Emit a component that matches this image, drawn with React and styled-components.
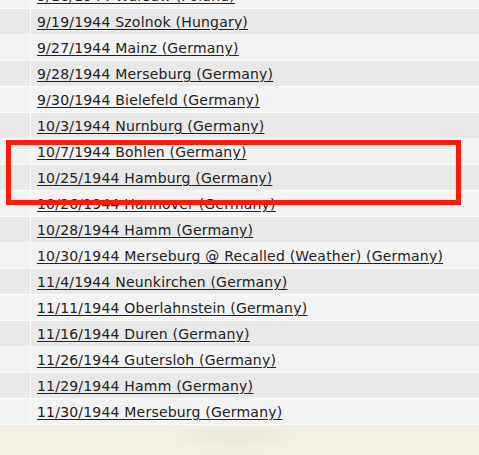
import React from 'react'
import styled, { createGlobalStyle } from 'styled-components'

const missions = [
  '9/18/1944 Warsaw (Poland)',
  '9/19/1944 Szolnok (Hungary)',
  '9/27/1944 Mainz (Germany)',
  '9/28/1944 Merseburg (Germany)',
  '9/30/1944 Bielefeld (Germany)',
  '10/3/1944 Nurnburg (Germany)',
  '10/7/1944 Bohlen (Germany)',
  '10/25/1944 Hamburg (Germany)',
  '10/26/1944 Hannover (Germany)',
  '10/28/1944 Hamm (Germany)',
  '10/30/1944 Merseburg @ Recalled (Weather) (Germany)',
  '11/4/1944 Neunkirchen (Germany)',
  '11/11/1944 Oberlahnstein (Germany)',
  '11/16/1944 Duren (Germany)',
  '11/26/1944 Gutersloh (Germany)',
  '11/29/1944 Hamm (Germany)',
  '11/30/1944 Merseburg (Germany)'
]

const App = () => {
  return (
    <Page>
      <GlobalStyle />
      <Table>
        {missions.map((m, i) => (
          <Row key={m} dark={i % 2 === 1}>
            <Gutter />
            <Cell>
              <MissionLink href='#'>{m}</MissionLink>
            </Cell>
          </Row>
        ))}
      </Table>
      <Footer>
        <Blur />
      </Footer>
      <Highlight />
    </Page>
  )
}

const GlobalStyle = createGlobalStyle`
  html, body {
    margin: 0;
    padding: 0;
    background-color: #f4f1e4;
    overflow: hidden;
  }
`

const Page = styled.div`
  position: relative;
  width: 479px;
  height: 455px;
  overflow: hidden;
  font-family: 'DejaVu Sans', Verdana, sans-serif;
  font-size: 14px;
`

const Table = styled.div`
  display: flex;
  flex-direction: column;
  gap: 1px;
  margin-top: -17px;
  padding-bottom: 1px;
  background-color: #fbfbfb;
`

const Row = styled.div`
  display: grid;
  grid-template-columns: 30px 1fr;
  column-gap: 1px;
  height: 25px;
  background-color: #fbfbfb;
  > div {
    background-color: ${props => (props.dark ? '#e8e8e8' : '#f3f3f3')};
  }
`

const Gutter = styled.div``

const Cell = styled.div`
  display: flex;
  align-items: center;
  padding: 1px 0 0 6px;
  white-space: nowrap;
`

const MissionLink = styled.a`
  color: #222222;
  text-decoration: underline;
  text-underline-offset: 2px;
  letter-spacing: 0.2px;
`

const Footer = styled.div`
  position: relative;
  height: 40px;
  background-color: #f4f1e4;
`

const Blur = styled.div`
  position: absolute;
  left: 180px;
  top: 4px;
  width: 110px;
  height: 14px;
  border-radius: 50%;
  background-color: #dcd9cf;
  filter: blur(7px);
  opacity: 0.6;
`

const Highlight = styled.div`
  position: absolute;
  left: 6px;
  top: 140px;
  width: 445px;
  height: 55px;
  border: 5px solid #fe1a06;
`

export default App
